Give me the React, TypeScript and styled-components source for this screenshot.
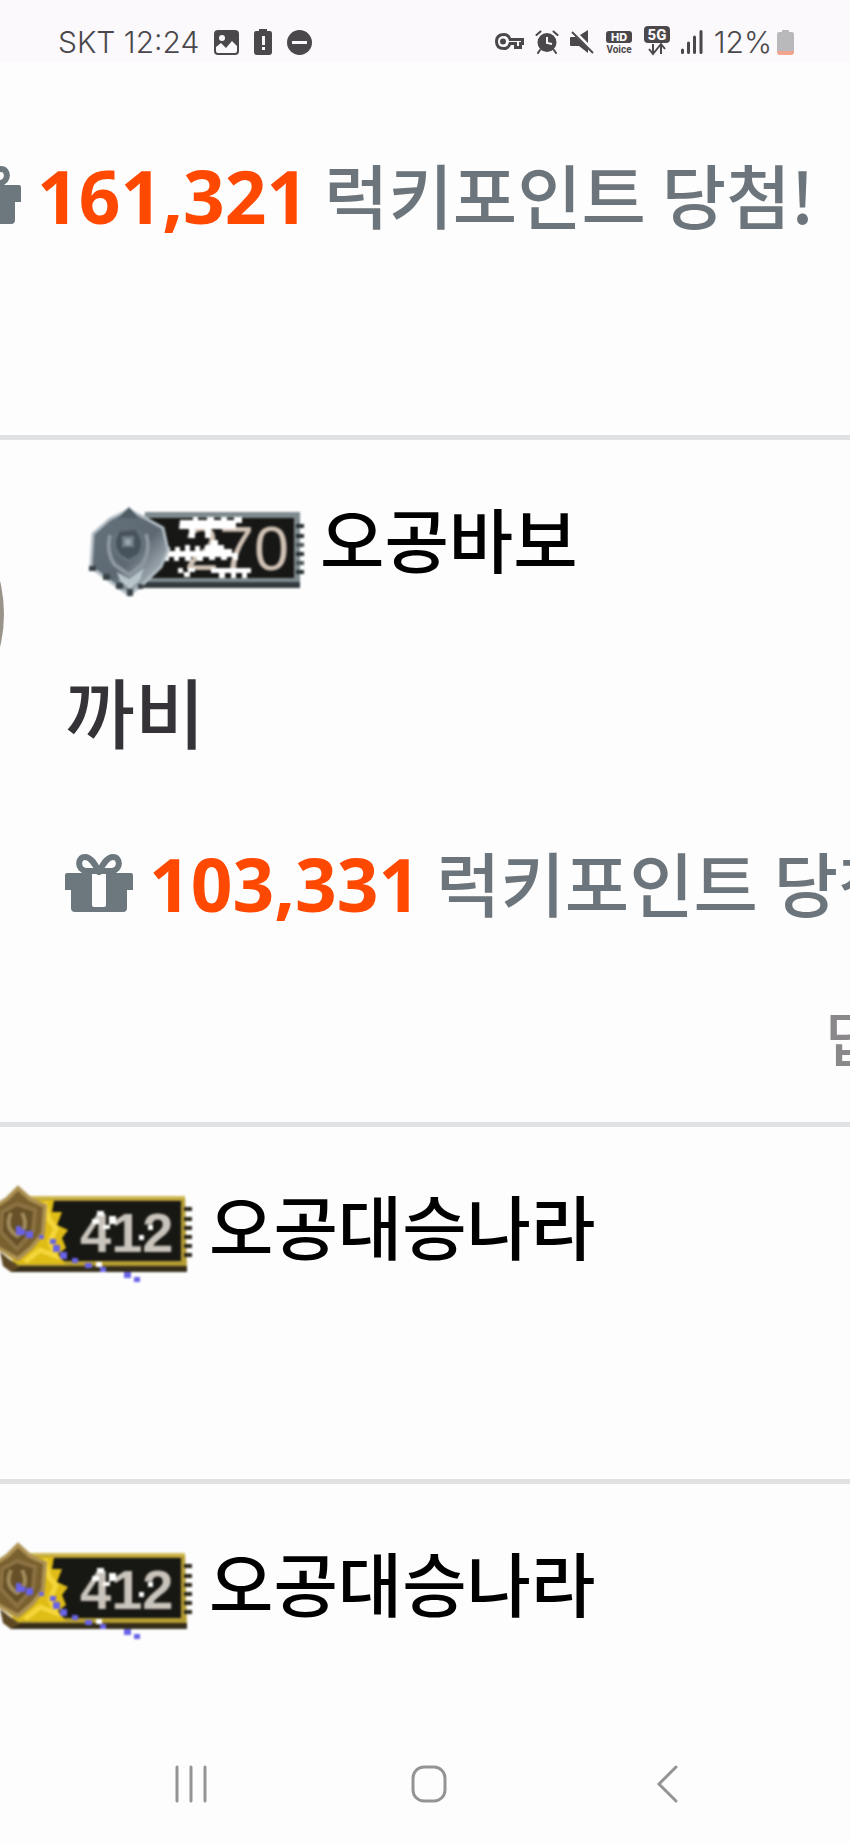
import React from 'react';
import styled, { createGlobalStyle } from 'styled-components';

const GlobalStyle = createGlobalStyle`
  * { box-sizing: border-box; }
  body { margin: 0; background: #fdfdfd; }
`;

const INK = '#4a484b';

const Page = styled.div`
  display: flex;
  flex-direction: column;
  min-height: 100vh;
  overflow: hidden;
  background: #fdfdfd;
  font-family: 'Noto Sans CJK KR', sans-serif;
`;

const StatusBar = styled.header`
  display: flex;
  align-items: center;
  justify-content: space-between;
  height: 62px;
  padding: 22px 56px 0 58px;
  background: #fbf9fc;
  color: ${INK};
`;

const StatusGroup = styled.div<{ $gap: number }>`
  display: flex;
  align-items: center;
  gap: ${(p) => p.$gap}px;
  svg { display: block; flex: none; }
`;

const StatusText = styled.span`
  font: 300 30px/40px Inter, sans-serif;
  white-space: nowrap;
`;

const Charge = styled.span`
  display: flex;
  align-items: center;
  gap: 5px;
`;

const Feed = styled.main`
  flex: 1;
`;

const Comment = styled.article<{ $top: number; $bottom: number }>`
  display: flex;
  align-items: flex-start;
  padding: ${(p) => p.$top}px 0 ${(p) => p.$bottom}px;
  & + & { border-top: 5px solid #dfe1e3; }
`;

const Avatar = styled.div`
  flex: none;
  width: 280px;
  height: 280px;
  margin: -16px 0 0 -276px;
  border-radius: 50%;
  background: #99938a;
`;

const Body = styled.div<{ $indent: number }>`
  display: flex;
  flex-direction: column;
  flex: 1;
  min-width: 0;
  margin-left: ${(p) => p.$indent}px;
`;

const Author = styled.h2<{ $indent?: number }>`
  display: flex;
  align-items: flex-start;
  gap: 16px;
  margin: 0 0 0 ${(p) => p.$indent ?? 0}px;
  color: #000;
  font-size: 70px;
  font-weight: 500;
  line-height: 96px;
  white-space: nowrap;
  svg { display: block; flex: none; margin: 17px 0 -17px; overflow: visible; filter: blur(1px); }
`;

const Message = styled.p`
  margin: 76px 0 0;
  color: #353337;
  font-size: 76px;
  font-weight: 500;
  line-height: 96px;
`;

const Prize = styled.p<{ $top?: number }>`
  display: flex;
  align-items: center;
  gap: 16px;
  margin: ${(p) => p.$top ?? 0}px 0 0;
  color: #6c757b;
  font-size: 70px;
  font-weight: 500;
  line-height: 96px;
  white-space: nowrap;
  svg { display: block; flex: none; }
`;

const Points = styled.strong`
  color: #ff4800;
  font-family: 'Open Sans', sans-serif;
  font-size: 73px;
  font-weight: 700;
`;

const Reply = styled.button`
  align-self: flex-end;
  margin: 62px -86px 0 0;
  padding: 0;
  border: 0;
  background: none;
  color: #8b888c;
  font: 500 60px/84px 'Noto Sans CJK KR', sans-serif;
  white-space: nowrap;
`;

const NavBar = styled.nav`
  display: grid;
  grid-template-columns: repeat(3, 1fr);
  height: 116px;
  padding: 0 64px 0 72px;
`;

const NavButton = styled.button`
  display: flex;
  align-items: center;
  justify-content: center;
  padding: 0;
  border: 0;
  background: none;
`;

const GiftIcon = () => (
  <svg width="68" height="60" viewBox="0 0 68 60" aria-hidden="true">
    <g fill="none" stroke="#6c777e" strokeWidth="6" strokeLinejoin="round">
      <path d="M34 19C30 11 26 4 20 4C12 4 12 17 21 18H34Z" />
      <path d="M34 19C38 11 42 4 48 4C56 4 56 17 47 18H34Z" />
    </g>
    <path fill="#6c777e" fillRule="evenodd" d="M2 20H66Q68 20 68 22V37H62V55Q62 59 58 59H10Q6 59 6 55V37H0V22Q0 20 2 20ZM27 20V52Q27 54 29 54H39Q41 54 41 52V20Z" />
  </svg>
);

const teeth = [17, 27, 36, 45, 54, 63];

const SilverBadge = () => (
  <svg width="215" height="96" viewBox="0 0 215 96" role="img" aria-label="레벨 270">
    <defs>
      <linearGradient id="silver" x1="0" y1="0" x2="1" y2="1">
        <stop offset="0" stopColor="#66727c" />
        <stop offset="0.55" stopColor="#5d6872" />
        <stop offset="0.8" stopColor="#a2adb3" />
        <stop offset="1" stopColor="#4f5a61" />
      </linearGradient>
    </defs>
    <path d="M56 5H211V80H50Z" fill="#7e8a8e" />
    <path d="M56 75H211V81H50Z" fill="#343c3f" />
    <path d="M60 11H205V71H55Z" fill="#171716" />
    {teeth.map((y) => <path key={y} d={`M207 ${y}h8v4h-8z`} fill={y % 2 ? '#26302f' : '#4b5554'} />)}
    <text x="95" y="63" fontFamily="Liberation Sans" fontSize="63" fill="#cfc1b3">270</text>
    <g fill="#fff">
      <path d="M91 13h13v-3h5v3h9v-3h7v3h7v-3h6v3h7v-3h8v6h-6v6h-25v9h-6v-9h-10v9h-6v-9h-10z" />
      <path d="M76 40h5v4h5v-4h5v4h5v-6h5v6h5v-5h5v5h5v-6h6v-5h7v5h6v4h8v4h6v7h-5v-3h-6v3h-6v-3h-6v3h-6v-3h-6v4h-6v-4h-6v4h-6v-4h-6v4h-5v-4h-5v4h-5v-4h-4z" />
      <path d="M89 61h5v4h5v-4h7v4h-5v5h-6v-4h-6zM122 61h40v5h-4v5h-5v-5h-6v5h-5v-5h-6v5h-6v-5h-8z" />
    </g>
    <path d="M40 3L58 12L74 21L79 43L72 60L54 77L40 88L22 75L2 60L4 27L21 12Z" fill="url(#silver)" stroke="#b2bdc4" strokeWidth="3" />
    <path d="M21 28Q17 44 25 57L40 68L54 57Q62 42 57 27" fill="none" stroke="#8d98a1" strokeWidth="4" />
    <path d="M29 25Q21 38 31 49L40 54L50 48Q58 35 48 23" fill="#48525d" stroke="#66727c" strokeWidth="3" />
    <path d="M33 29h12v11h-12z" fill="#707d87" />
    <path d="M36 32h6v6h-6z" fill="#9aa5ab" />
    <path d="M0 59h7v5H0zM14 67h7v6h-7zM27 76h7v6h-7zM38 82h6v7h-6zM49 77h5v5h-5z" fill="#384247" />
    <path d="M28 65L40 72L55 61L51 73L41 82L31 74Z" fill="#b8c5c9" />
    <path d="M40 0L50 11H29Z" fill="#515d65" />
  </svg>
);

const GoldBadge = () => (
  <svg width="215" height="96" viewBox="0 4 215 96" role="img" aria-label="레벨 412">
    <path d="M50 6H207L209 81H32Z" fill="#b39b32" />
    <path d="M36 76H209V82H33Z" fill="#352d19" />
    <path d="M52 11H203V71H52Z" fill="#171713" />
    <path d="M52 6H207V9H52Z" fill="#d0b952" />
    {teeth.map((y) => <path key={y} d={`M206 ${y}h8v4h-8z`} fill="#292619" />)}
    <path d="M60 10H76L74 22L84 22L79 35L90 40L84 48L88 58L80 64L88 74H40L23 61L59 52Z" fill="#dfbd16" />
    <path d="M67 12L71 30L78 38L72 52L78 66L62 60L47 72" fill="none" stroke="#f5d63b" strokeWidth="5" />
    <path d="M40 -2L52 9L67 16L65 43L54 57L40 69L20 58L14 40L18 16L29 9Z" fill="#79602f" stroke="#ad9253" strokeWidth="4" />
    <path d="M39 14L57 20L55 41L39 59L23 42L24 22Z" fill="#665027" stroke="#8d7343" strokeWidth="4" />
    <path d="M33 23Q26 38 39 46Q52 38 44 23" fill="none" stroke="#a18a5b" strokeWidth="4" />
    <path d="M22 62L31 69L42 77L33 82L25 76Z" fill="#5e4824" />
    <text x="102" y="62" fontFamily="Liberation Sans" fontWeight="700" fontSize="56" fill="#c9c4bb">412</text>
    <path fill="#fff" d="M119 21h7v5h-7zM114 29h7v5h-7zM131 26h7v8h-6v5h-7v-4h6zM161 45h5v5h-5zM170 35h5v5h-5zM118 72h6v5h-6z" />
    <path fill="#6962e7" d="M38 36h5v3h4v6h-9zM48 41h7v7h-7zM61 45h5v4h-5zM72 49h6v5h-6zM75 55h7v7h-7zM82 62h7v7h-7zM94 68h6v5h-6zM107 73h7v5h-7zM122 77h6v5h-6zM146 82h7v6h-7zM156 87h6v5h-6z" />
  </svg>
);

const ImageIcon = () => (
  <svg width="25" height="25" viewBox="0 0 25 25" aria-hidden="true">
    <rect width="25" height="25" rx="4" fill={INK} />
    <circle cx="8" cy="8" r="3" fill="#fbf9fc" />
    <path d="M2 17L7 13L12 18L18 11L23 16V21Q23 23 21 23H4Q2 23 2 21Z" fill="#fbf9fc" />
  </svg>
);

const BatteryAlertIcon = () => (
  <svg width="18" height="26" viewBox="0 0 18 26" aria-hidden="true">
    <path d="M5 0H13V2H16Q18 2 18 5V23Q18 26 15 26H3Q0 26 0 23V5Q0 2 2 2H5Z" fill={INK} />
    <path d="M8 7h3v9H8zM8 18h3v3H8z" fill="#fbf9fc" />
  </svg>
);

const DndIcon = () => (
  <svg width="25" height="25" viewBox="0 0 25 25" aria-hidden="true">
    <circle cx="12.5" cy="12.5" r="12.5" fill={INK} />
    <path d="M5 11h15v3H5z" fill="#fbf9fc" />
  </svg>
);

const KeyIcon = () => (
  <svg width="29" height="18" viewBox="0 0 29 18" aria-hidden="true">
    <path fillRule="evenodd" fill={INK} d="M9 0Q14 0 16 5H29V12H27V16H19V12H16Q14 17 9 17Q0 17 0 8.500Q0 0 9 0ZM9 3Q3 3 3 8.500Q3 14 9 14Q13 14 14 9H22V13H24V9H26V8H14Q13 3 9 3ZM8 5.500A3 3 0 1 0 8 11.500A3 3 0 1 0 8 5.500Z" />
  </svg>
);

const AlarmIcon = () => (
  <svg width="24" height="24" viewBox="0 0 24 24" aria-hidden="true">
    <circle cx="12" cy="12.500" r="9.500" fill={INK} />
    <path d="M1.500 5L5.500 1.500M22.500 5L18.500 1.500M5 20L3 23M19 20L21 23" stroke={INK} strokeWidth="2" strokeLinecap="round" />
    <path d="M12 7V13L17 14" fill="none" stroke="#fbf9fc" strokeWidth="2" />
  </svg>
);

const MuteIcon = () => (
  <svg width="24" height="24" viewBox="0 0 24 24" aria-hidden="true">
    <path d="M0 8Q0 7 1 7H6L18 19V23L9 16H1Q0 16 0 15ZM10 5L18 0V13Z" fill={INK} />
    <path d="M2 2L23 23" stroke={INK} strokeWidth="2" />
  </svg>
);

const HdVoiceIcon = () => (
  <svg width="28" height="25" viewBox="0 0 28 25" aria-hidden="true">
    <rect x="1" y="1" width="26" height="12" rx="3" fill={INK} />
    <text x="14" y="11" textAnchor="middle" fontFamily="Inter" fontWeight="800" fontSize="11" fill="#fbf9fc">HD</text>
    <text x="14" y="23" textAnchor="middle" fontFamily="Roboto" fontWeight="700" fontSize="10" fill={INK}>Voice</text>
  </svg>
);

const FiveGIcon = () => (
  <svg width="26" height="32" viewBox="0 0 26 32" aria-hidden="true">
    <rect width="26" height="17" rx="4" fill={INK} />
    <text x="13" y="14" textAnchor="middle" fontFamily="Roboto" fontWeight="800" fontSize="15" fill="#fbf9fc">5G</text>
    <path d="M9 18V27M5 23L9 28L13 23M17 28V19M13 23L17 18L21 23" fill="none" stroke={INK} strokeWidth="2" />
  </svg>
);

const SignalIcon = () => (
  <svg width="22" height="24" viewBox="0 0 22 24" aria-hidden="true">
    <path d="M1.500 20V22.500M7.500 13V22.500M13.500 7V22.500M20 1.500V22.500" stroke={INK} strokeWidth="3" strokeLinecap="round" />
  </svg>
);

const LowBatteryIcon = () => (
  <svg width="17" height="25" viewBox="0 0 17 25" aria-hidden="true">
    <path d="M5 0H12V2H15Q17 2 17 5V22H0V5Q0 2 2 2H5Z" fill="#b9b8ba" />
    <path d="M0 21H17V22Q17 25 14 25H3Q0 25 0 22Z" fill="#f2a48f" />
  </svg>
);

const PrizeLine = ({ amount, top }: { amount: string; top?: number }) => (
  <Prize $top={top}>
    <GiftIcon />
    <span><Points>{amount}</Points> 럭키포인트 당첨!</span>
  </Prize>
);

export default function App() {
  return (
    <Page>
      <GlobalStyle />
      <StatusBar>
        <StatusGroup $gap={15}>
          <StatusText>SKT 12:24</StatusText>
          <ImageIcon />
          <BatteryAlertIcon />
          <DndIcon />
        </StatusGroup>
        <StatusGroup $gap={11}>
          <KeyIcon />
          <AlarmIcon />
          <MuteIcon />
          <HdVoiceIcon />
          <FiveGIcon />
          <SignalIcon />
          <Charge>
            <StatusText>12%</StatusText>
            <LowBatteryIcon />
          </Charge>
        </StatusGroup>
      </StatusBar>
      <Feed>
        <Comment $top={84} $bottom={191}>
          <Body $indent={-47}>
            <PrizeLine amount="161,321" />
          </Body>
        </Comment>
        <Comment $top={50} $bottom={44}>
          <Avatar />
          <Body $indent={61}>
            <Author $indent={24}><SilverBadge />오공바보</Author>
            <Message>까비</Message>
            <PrizeLine amount="103,331" top={76} />
            <Reply type="button">답글</Reply>
          </Body>
        </Comment>
        <Comment $top={50} $bottom={206}>
          <Body $indent={-22}>
            <Author><GoldBadge />오공대승나라</Author>
          </Body>
        </Comment>
        <Comment $top={50} $bottom={90}>
          <Body $indent={-22}>
            <Author><GoldBadge />오공대승나라</Author>
          </Body>
        </Comment>
      </Feed>
      <NavBar aria-label="시스템 탐색">
        <NavButton type="button" aria-label="최근 앱">
          <svg width="36" height="40" viewBox="0 0 36 40" fill="none" stroke="#969397" strokeWidth="3" strokeLinecap="round">
            <path d="M4 3V37M18 3V37M32 3V37" />
          </svg>
        </NavButton>
        <NavButton type="button" aria-label="홈">
          <svg width="36" height="40" viewBox="0 0 36 40" fill="none" stroke="#969397" strokeWidth="3">
            <rect x="2" y="3" width="32" height="34" rx="11" />
          </svg>
        </NavButton>
        <NavButton type="button" aria-label="뒤로">
          <svg width="36" height="40" viewBox="0 0 36 40" fill="none" stroke="#969397" strokeWidth="3" strokeLinecap="round">
            <path d="M27 3L10 20L27 37" />
          </svg>
        </NavButton>
      </NavBar>
    </Page>
  );
}
